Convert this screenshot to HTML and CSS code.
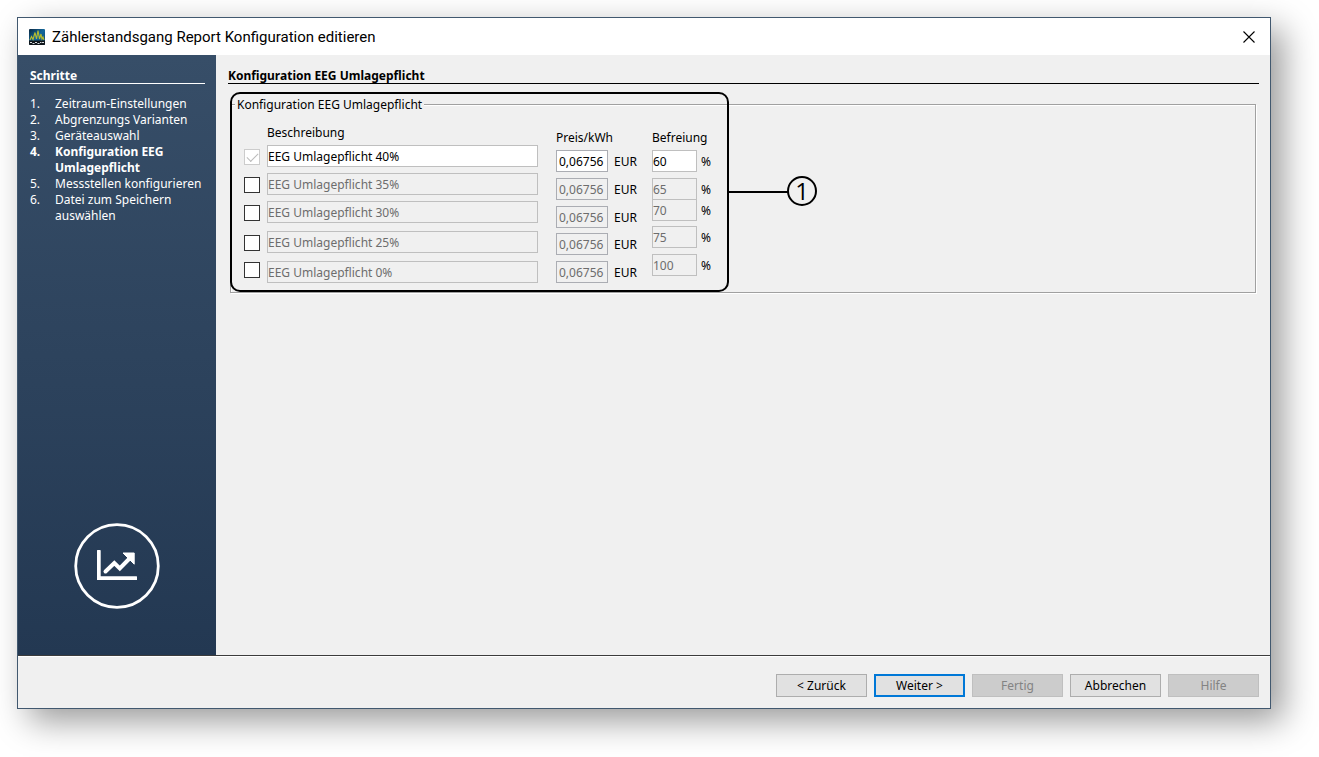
FILE: index.html
```html
<!DOCTYPE html>
<html lang="de">
<head>
<meta charset="utf-8">
<title>Zählerstandsgang Report Konfiguration editieren</title>
<link rel="stylesheet" href="styles.css">
</head>
<body>

<div class="window">
  <header class="titlebar">
    <svg class="app-icon" viewBox="0 0 16 16" aria-hidden="true">
      <defs>
        <linearGradient id="iconSky" x1="0" y1="0" x2="1" y2="1">
          <stop offset="0" stop-color="#0a2740"/>
          <stop offset="0.5" stop-color="#15689c"/>
          <stop offset="1" stop-color="#0d4468"/>
        </linearGradient>
      </defs>
      <rect width="16" height="16" rx="1" fill="url(#iconSky)"/>
      <path d="M0 11.500H16V15Q16 16 15 16H1Q0 16 0 15Z" fill="#10161b"/>
      <path d="M1 11L2.500 7.500L4 10.500L6 3.500L7.500 10L9 1.500L10.500 10L12 5L13 10L14 8L15 11" fill="none" stroke="#b9bd2c" stroke-width="1.100"/>
      <path d="M1 13.500h2M3.500 14.500h2M6 13.500h2M8.500 14.500h2M11 13.500h1.500M13 13.500h2" stroke="#d5d9dc" stroke-width="1"/>
    </svg>
    <h1 class="title">Zählerstandsgang Report Konfiguration editieren</h1>
    <button class="close" type="button" aria-label="Schließen">
      <svg viewBox="0 0 12 12"><path d="M0.500 0.500L11.500 11.500M11.500 0.500L0.500 11.500" stroke="#000" stroke-width="1.100"/></svg>
    </button>
  </header>

  <div class="content">
    <aside class="sidebar">
      <h2 class="heading">Schritte</h2>
      <ol class="steps">
        <li><span>1.</span><span>Zeitraum-Einstellungen</span></li>
        <li><span>2.</span><span>Abgrenzungs Varianten</span></li>
        <li><span>3.</span><span>Geräteauswahl</span></li>
        <li class="active"><span>4.</span><span>Konfiguration EEG Umlagepflicht</span></li>
        <li><span>5.</span><span>Messstellen konfigurieren</span></li>
        <li><span>6.</span><span>Datei zum Speichern auswählen</span></li>
      </ol>
      <svg class="chart-icon" viewBox="0 0 86 86" aria-hidden="true">
        <circle cx="43" cy="43" r="41.300" fill="none" stroke="#fff" stroke-width="2.800"/>
        <path d="M23 27.500Q23 27 23.500 27H26Q26.700 27 26.700 27.500V53.300H62.500Q63 53.300 63 53.800V56.500Q63 57 62.500 57H23.500Q23 57 23 56.500Z" fill="#fff"/>
        <path d="M31.500 48.500L40.300 40L45.800 45.500L56 35" fill="none" stroke="#fff" stroke-width="4" stroke-linecap="round"/>
        <path d="M49 30H60.200V41.200Z" fill="#fff" stroke="#fff" stroke-linejoin="round"/>
      </svg>
    </aside>

    <main class="panel">
      <h2 class="heading">Konfiguration EEG Umlagepflicht</h2>
      <fieldset class="group">
        <legend>Konfiguration EEG Umlagepflicht</legend>

        <div class="columns">
          <div class="checks">
            <input type="checkbox" aria-label="EEG Umlagepflicht 40% aktiv" checked disabled>
            <input type="checkbox" aria-label="EEG Umlagepflicht 35% aktiv">
            <input type="checkbox" aria-label="EEG Umlagepflicht 30% aktiv">
            <input type="checkbox" aria-label="EEG Umlagepflicht 25% aktiv">
            <input type="checkbox" aria-label="EEG Umlagepflicht 0% aktiv">
          </div>

          <div class="descriptions">
            <label for="desc1">Beschreibung</label>
            <div class="rows">
              <input type="text" id="desc1" value="EEG Umlagepflicht 40%">
              <input type="text" aria-label="Beschreibung 2" value="EEG Umlagepflicht 35%" disabled>
              <input type="text" aria-label="Beschreibung 3" value="EEG Umlagepflicht 30%" disabled>
              <input type="text" aria-label="Beschreibung 4" value="EEG Umlagepflicht 25%" disabled>
              <input type="text" aria-label="Beschreibung 5" value="EEG Umlagepflicht 0%" disabled>
            </div>
          </div>

          <div class="prices">
            <label for="price1">Preis/kWh</label>
            <div class="rows">
              <div class="unit"><input type="text" id="price1" value="0,06756"><span>EUR</span></div>
              <div class="unit"><input type="text" aria-label="Preis/kWh 2" value="0,06756" disabled><span>EUR</span></div>
              <div class="unit"><input type="text" aria-label="Preis/kWh 3" value="0,06756" disabled><span>EUR</span></div>
              <div class="unit"><input type="text" aria-label="Preis/kWh 4" value="0,06756" disabled><span>EUR</span></div>
              <div class="unit"><input type="text" aria-label="Preis/kWh 5" value="0,06756" disabled><span>EUR</span></div>
            </div>
          </div>

          <div class="exemptions">
            <label for="ex1">Befreiung</label>
            <div class="rows">
              <div class="unit"><input type="text" id="ex1" value="60"><span>%</span></div>
              <div class="unit"><input type="text" aria-label="Befreiung 2" value="65" disabled><span>%</span></div>
              <div class="unit"><input type="text" aria-label="Befreiung 3" value="70" disabled><span>%</span></div>
              <div class="unit"><input type="text" aria-label="Befreiung 4" value="75" disabled><span>%</span></div>
              <div class="unit"><input type="text" aria-label="Befreiung 5" value="100" disabled><span>%</span></div>
            </div>
          </div>
        </div>

        <!-- Callout frame over the form -->
        <div class="callout">
          <span class="callout-line"></span>
          <span class="callout-number">1</span>
        </div>
      </fieldset>
    </main>
  </div>

  <footer class="buttons">
    <button type="button">&lt; Zurück</button>
    <button type="button" class="default">Weiter &gt;</button>
    <button type="button" disabled>Fertig</button>
    <button type="button">Abbrechen</button>
    <button type="button" disabled>Hilfe</button>
  </footer>
</div>

</body>
</html>
```
FILE: styles.css
```css
* {
  box-sizing: border-box;
}

body {
  margin: 0;
  min-height: 100vh;
  padding: 17px 48px 48px 17px;
  display: flex;
  background: #fff;
  color: #000;
  font: 12px/16px "Noto Sans", Tahoma, sans-serif;
}

h1, h2, ol {
  margin: 0;
  padding: 0;
  font-weight: normal;
}

input, button {
  font: inherit;
  color: inherit;
  margin: 0;
}

.window {
  flex: 1;
  display: flex;
  flex-direction: column;
  border: 1px solid #41586f;
  background: #f0f0f0;
  box-shadow: 12px 12px 32px rgba(0, 0, 0, 0.4);
}

/* Title bar */
.titlebar {
  display: flex;
  align-items: center;
  height: 37px;
  padding: 0 14px 0 11px;
  background: #fff;
}

.app-icon {
  width: 16px;
  height: 16px;
}

.title {
  flex: 1;
  margin-left: 7px;
  font: 15px/20px Roboto, "Segoe UI", sans-serif;
}

.close {
  display: flex;
  padding: 0;
  border: 0;
  background: none;
}

.close svg {
  width: 14px;
  height: 12px;
}

.content {
  flex: 1;
  display: flex;
  border-bottom: 1px solid #3c3c3c;
}

.heading {
  height: 17px;
  border-bottom: 1px solid;
  font-size: 12px;
  font-weight: bold;
  line-height: 18px;
}

/* Steps */
.sidebar {
  width: 198px;
  padding: 12px 11px 46px 12px;
  display: flex;
  flex-direction: column;
  background: linear-gradient(#374e68, #233852);
  color: #fff;
}

.steps {
  margin-top: 12px;
  list-style: none;
}

.steps li {
  display: grid;
  grid-template-columns: 25px 1fr;
}

.steps .active {
  font-weight: bold;
}

.chart-icon {
  width: 86px;
  height: 86px;
  margin: auto 0 0 44px;
}

/* Form */
.panel {
  flex: 1;
  padding: 12px 11px 12px 12px;
}

.group {
  position: relative;
  min-width: 0;
  margin: 11px 3px 0 2px;
  padding: 0 12px 9px;
  border: 1px solid #a0a0a0;
  box-shadow: 1px 1px 0 #fff, inset 1px 1px 0 #fff;
}

.group legend {
  margin-left: -8px;
  padding: 2px 2px 0;
  background: #f0f0f0;
}

.columns {
  display: flex;
  align-items: flex-start;
}

.columns label {
  display: block;
  height: 20px;
}

.rows,
.checks {
  display: grid;
  align-items: start;
}

.checks {
  width: 24px;
  padding: 36px 0 0 1px;
  grid-template-rows: 28px 28px 30px 27px 16px;
}

.descriptions {
  width: 271px;
  padding-top: 12px;
}

.descriptions .rows {
  grid-template-rows: 28px 28px 30px 30px 22px;
}

.prices,
.exemptions {
  padding-top: 17px;
}

.prices {
  width: 96px;
  margin-left: 18px;
}

.prices .rows {
  grid-template-rows: 28px 28px 27px 28px 22px;
}

.exemptions .rows {
  grid-template-rows: 28px 21px 27px 28px 22px;
}

.unit {
  display: flex;
  align-items: center;
}

.unit span {
  padding-top: 2px;
}

.prices .unit {
  gap: 6px;
}

.exemptions .unit {
  gap: 4px;
}

input[type="text"] {
  width: 100%;
  height: 22px;
  padding: 0;
  border: 1px solid #bfbfbf;
  border-radius: 0;
  background: #fff;
}

.prices input[type="text"] {
  width: 52px;
  padding: 0 2px;
  border-color: #abadb3;
}

.exemptions input[type="text"] {
  width: 45px;
}

input[type="text"]:disabled {
  background: #f0f0f0;
  color: #6d6d6d;
}

input[type="checkbox"] {
  appearance: none;
  width: 16px;
  height: 16px;
  border: 1px solid #333;
  background: #fff;
}

input[type="checkbox"]:disabled {
  border-color: #ccc;
}

input[type="checkbox"]:checked::before {
  content: "";
  display: block;
  width: 10px;
  height: 5px;
  margin: 3px 2px;
  border-left: 1px solid #bbb;
  border-bottom: 1px solid #bbb;
  transform: rotate(-45deg);
}

/* Callout */
.callout {
  position: absolute;
  top: -21px;
  left: -1px;
  width: 499px;
  height: 200px;
  border: 2px solid #000;
  border-radius: 10px;
  pointer-events: none;
}

.callout-line {
  position: absolute;
  top: 97px;
  left: 497px;
  width: 60px;
  height: 2px;
  background: #000;
}

.callout-number {
  position: absolute;
  top: 82px;
  left: 555px;
  width: 30px;
  height: 30px;
  border: 2px solid #000;
  border-radius: 50%;
  font: 24px/26px "Open Sans", sans-serif;
  text-align: center;
}

/* Buttons */
.buttons {
  display: flex;
  justify-content: flex-end;
  gap: 7px;
  padding: 17px 11px 11px;
  border-top: 1px solid #fff;
}

.buttons button {
  width: 91px;
  height: 23px;
  padding: 0;
  border: 1px solid #adadad;
  background: #e1e1e1;
}

.buttons .default {
  border: 2px solid #0078d7;
}

.buttons button:disabled {
  border-color: #bfbfbf;
  background: #ccc;
  color: #838383;
}
```
